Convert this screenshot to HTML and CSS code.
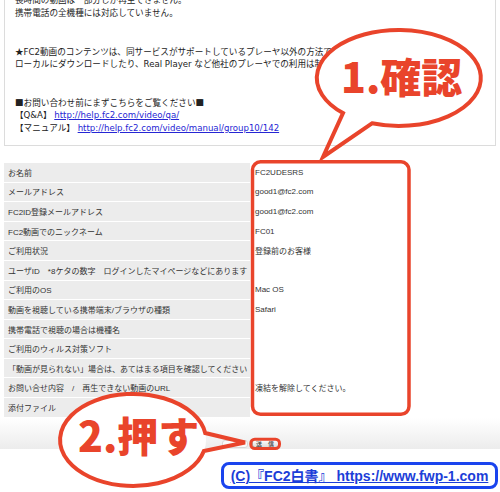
FILE: index.html
```html
<!DOCTYPE html>
<html lang="ja">
<head>
<meta charset="utf-8">
<title>お問い合わせ確認</title>
<link rel="stylesheet" href="styles.css">
</head>
<body>
<div class="page">
  <div class="notice">
    <div class="line">長時間の動画は一部分しか再生できません。</div>
    <div class="line">携帯電話の全機種には対応していません。</div>
    <div class="line">&nbsp;</div>
    <div class="line">&nbsp;</div>
    <div class="line"><span class="cj">★</span>FC2動画のコンテンツは、同サービスがサポートしているプレーヤ以外の方法で再</div>
    <div class="line">ローカルにダウンロードしたり、Real Player など他社のプレーヤでの利用は制</div>
    <div class="line">&nbsp;</div>
    <div class="line">&nbsp;</div>
    <div class="line"><span class="cj">■</span>お問い合わせ前にまずこちらをご覧ください<span class="cj">■</span></div>
    <div class="line">【Q&amp;A】 <a href="#">http://help.fc2.com/video/qa/</a></div>
    <div class="line">【マニュアル】 <a href="#">http://help.fc2.com/video/manual/group10/142</a></div>
  </div>

  <div class="form">
    <div class="label">お名前</div><div class="value">FC2UDESRS</div>
    <div class="label">メールアドレス</div><div class="value">good1@fc2.com</div>
    <div class="label">FC2ID登録メールアドレス</div><div class="value">good1@fc2.com</div>
    <div class="label">FC2動画でのニックネーム</div><div class="value">FC01</div>
    <div class="label">ご利用状況</div><div class="value">登録前のお客様</div>
    <div class="label">ユーザID　*8ケタの数字　ログインしたマイページなどにあります</div><div class="value"></div>
    <div class="label">ご利用のOS</div><div class="value">Mac OS</div>
    <div class="label">動画を視聴している携帯端末/ブラウザの種類</div><div class="value">Safari</div>
    <div class="label">携帯電話で視聴の場合は機種名</div><div class="value"></div>
    <div class="label">ご利用のウィルス対策ソフト</div><div class="value"></div>
    <div class="label">「動画が見られない」場合は、あてはまる項目を確認してください</div><div class="value"></div>
    <div class="label">お問い合せ内容　/　再生できない動画のURL</div><div class="value">凍結を解除してください。</div>
    <div class="label">添付ファイル</div><div class="value"></div>
  </div>

  <div class="actions">
    <button class="btn-back" type="button"></button>
    <button class="btn-send" type="button">送　信</button>
  </div>

  <svg class="marks" width="500" height="492" viewBox="0 0 500 492">
    <rect x="252.5" y="161.8" width="156.5" height="252.5" rx="8" fill="none" stroke="#e9442b" stroke-width="3.5"/>
    <ellipse cx="399" cy="78" rx="82" ry="48" fill="#fff"/>
    <path d="M343 113.1 A82 48 0 1 1 372 123.3 L323 157 Z" fill="none" stroke="#e9442b" stroke-width="4" stroke-linejoin="miter"/>
    <text x="341" y="93" class="big">1.確認</text>

    <rect x="250.8" y="439.2" width="28.7" height="9.3" rx="4" fill="none" stroke="#e9442b" stroke-width="3"/>
    <ellipse cx="133" cy="440" rx="73" ry="46" fill="#fff"/>
    <path d="M205.2 433 A73 46 0 1 0 203.9 451 L245 442.5 Z" fill="none" stroke="#e9442b" stroke-width="4" stroke-linejoin="miter"/>
    <text x="78" y="452" class="big">2.押す</text>
  </svg>

  <div class="credit"><span>(C)『FC2白書』 https://www.fwp-1.com</span></div>
</div>
</body>
</html>
```

FILE: styles.css
```css
html, body {
  margin: 0;
  padding: 0;
  background: #fff;
  overflow: hidden;
}

.page {
  position: relative;
  width: 500px;
  height: 492px;
  overflow: hidden;
  font-family: "Liberation Sans", "Noto Sans CJK JP", sans-serif;
  color: #333;
}

.notice {
  margin: -10px 4px 17px;
  border: 1px solid #dcdcdc;
  padding: 2.8px 10px 10.4px;
  font-family: "DejaVu Sans", "Noto Sans CJK JP", sans-serif;
  font-size: 8.6px;
  line-height: 12.8px;
  color: #222;
  white-space: nowrap;
  overflow: hidden;
}

.line {
  height: 12.8px;
}

.cj {
  font-family: "Noto Sans CJK JP", sans-serif;
}

.notice a {
  color: #2626d4;
  text-decoration: underline;
}

.form {
  display: grid;
  grid-template-columns: 246px 246px;
  grid-auto-rows: 18.6px;
  row-gap: 1px;
  margin: 0 4px;
  font-size: 8px;
  color: #333;
}

.label {
  background: #ececec;
  padding-left: 4px;
  display: flex;
  align-items: center;
  white-space: nowrap;
  overflow: hidden;
}

.value {
  background: #fff;
  padding-left: 5px;
  display: flex;
  align-items: center;
  white-space: nowrap;
}

.actions {
  margin-top: 1.2px;
  height: 31px;
  box-sizing: border-box;
  padding-bottom: 1px;
  background: linear-gradient(#fff, #ececec);
  display: flex;
  justify-content: center;
  align-items: flex-end;
  gap: 4px;
}

.btn-back,
.btn-send {
  margin: 0;
  padding: 0;
  box-sizing: border-box;
  border-radius: 3px;
  font-family: "Noto Sans CJK JP", sans-serif;
}

.btn-back {
  width: 26px;
  height: 8px;
  border: 1px solid #d8d8d8;
  background: #fafafa;
}

.btn-send {
  width: 27px;
  height: 9px;
  border: 1px solid #a9a9a9;
  background: linear-gradient(#fff, #dcdcdc);
  font-size: 6px;
  line-height: 7px;
  color: #222;
}

.marks {
  position: absolute;
  top: 0;
  left: 0;
  pointer-events: none;
}

.big {
  font-family: "Noto Sans CJK JP", sans-serif;
  font-weight: 900;
  font-size: 41px;
  fill: #e9442b;
}

.credit {
  position: absolute;
  left: 221px;
  top: 462px;
  width: 277px;
  height: 26.5px;
  box-sizing: border-box;
  border: 3.5px solid #1a44ee;
  border-radius: 8px;
  background: #fff;
  display: flex;
  align-items: center;
  justify-content: center;
  font-family: "Liberation Sans", "Noto Sans CJK JP", sans-serif;
  font-weight: bold;
  font-size: 14px;
  color: #1c3ed8;
  text-decoration: underline;
  white-space: nowrap;
}
```
